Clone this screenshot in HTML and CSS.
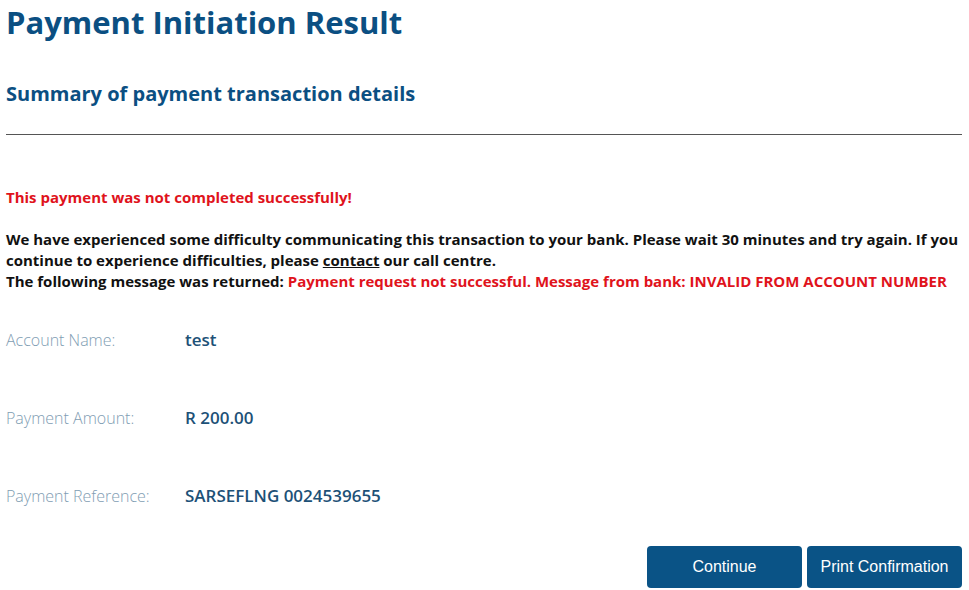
FILE: index.html
```html
<!DOCTYPE html>
<html lang="en">
<head>
<meta charset="utf-8">
<title>Payment Initiation Result</title>
<link rel="stylesheet" href="styles.css">
</head>
<body>
<main class="page">
  <h1 class="title">Payment Initiation Result</h1>
  <h2 class="subtitle">Summary of payment transaction details</h2>
  <hr class="rule">
  <p class="error-head">This payment was not completed successfully!</p>
  <p class="message">We have experienced some difficulty communicating this transaction to your bank. Please wait 30 minutes and try again. If you continue to experience difficulties, please <a href="#" class="link">contact</a> our call centre.<br>The following message was returned: <span class="error">Payment request not successful. Message from bank: INVALID FROM ACCOUNT NUMBER</span></p>
  <dl class="details">
    <div class="row"><dt class="label">Account Name:</dt><dd class="value">test</dd></div>
    <div class="row"><dt class="label">Payment Amount:</dt><dd class="value">R 200.00</dd></div>
    <div class="row"><dt class="label">Payment Reference:</dt><dd class="value">SARSEFLNG 0024539655</dd></div>
  </dl>
  <div class="actions">
    <button class="btn">Continue</button>
    <button class="btn">Print Confirmation</button>
  </div>
</main>
</body>
</html>
```
FILE: styles.css
```css
html, body { margin: 0; padding: 0; background: #fff; }
body { font-family: "Open Sans", "Liberation Sans", sans-serif; }
.page { padding: 0 7px 0 6px; }
.title { margin: 0; padding-top: 2px; font-size: 31px; line-height: 40px; font-weight: 700; color: #0b4f82; }
.subtitle { margin: 38px 0 0; font-size: 20px; line-height: 28px; font-weight: 700; color: #0b4f82; }
.rule { margin: 26px 0 0; border: 0; border-top: 1px solid #555; height: 0; }
.error-head { margin: 52px 0 0; font-size: 15px; line-height: 20px; font-weight: 700; color: #e0131c; }
.message { margin: 22px 0 0; font-size: 15px; line-height: 21px; font-weight: 700; color: #111; }
.link { color: #111; text-decoration: underline; }
.error { color: #e0131c; }
.details { margin: 37px 0 0; display: flex; flex-direction: column; gap: 56px; }
.row { display: flex; align-items: baseline; line-height: 22px; }
.label { width: 179px; font-size: 16px; font-weight: 300; color: #7f9db3; }
.value { margin: 0; font-size: 17px; font-weight: 600; color: #1d5177; }
.actions { display: flex; justify-content: flex-end; gap: 5px; margin-top: 39px; }
.btn { width: 155px; height: 42px; border: 0; border-radius: 4px; background: #0a5386; color: #fff; font-family: "Liberation Sans", Arial, sans-serif; font-size: 16px; cursor: pointer; }
```
